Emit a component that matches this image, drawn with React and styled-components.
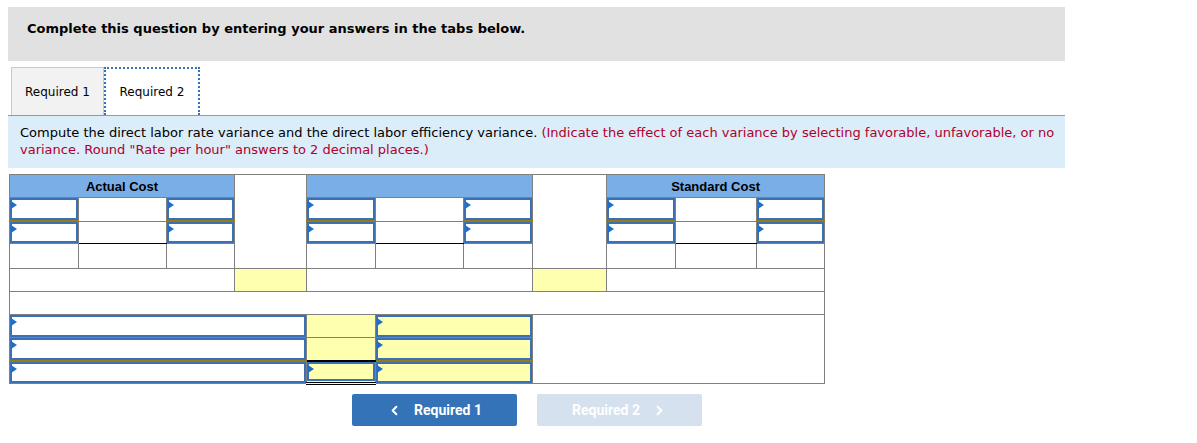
import React from 'react';
import styled, { createGlobalStyle } from 'styled-components';
import { ChevronLeft, ChevronRight } from 'lucide-react';

const GlobalStyle = createGlobalStyle`
  body{
    margin:0;
    background:#fff;
    font-family:"DejaVu Sans", Verdana, sans-serif;
    color:#000;
  }
`;

const Page = styled.div`
  padding:7px 0 0 8px;
  width:1057px;
`;

const Banner = styled.div`
  background:#e1e1e1;
  height:54px;
  box-sizing:border-box;
  padding:14px 0 0 19px;
  font-size:13px;
  line-height:16px;
  font-weight:bold;
`;

const Tabs = styled.div`
  display:flex;
  margin:6px 0 0 3px;
  height:48px;
`;

const Tab = styled.div`
  display:flex;
  align-items:center;
  justify-content:center;
  white-space:nowrap;
  font-size:12px;
  background:${({ $active }) => ($active ? '#fff' : '#f2f2f2')};
  border:${({ $active }) => ($active ? '2px dotted #3a70b5' : '1px solid #c8c8c8')};
  border-bottom:none;
  box-sizing:border-box;
  width:${({ $active }) => ($active ? '96px' : '93px')};
`;

const Instructions = styled.div`
  background:#dbedf9;
  border-top:1px solid #999;
  padding:8px 3px 10px 12px;
  font-size:13px;
  line-height:17px;
`;

const Red = styled.span`
  color:#b0002b;
`;

const Sheet = styled.table`
  border-collapse:collapse;
  table-layout:fixed;
  width:816px;
  margin:6px 0 0 1px;
  font-family:"Liberation Sans", Arial, sans-serif;
`;

const Head = styled.th`
  background:#79aee6;
  border:1px solid #808080;
  height:22px;
  padding:0;
  font-size:13px;
  font-weight:bold;
`;

const Cell = styled.td`
  border:1px solid #808080;
  border-top:${({ $olive, $blackTop }) =>
    $olive ? '2px solid #9a7a12' : $blackTop ? '2px solid #000' : '1px solid #808080'};
  border-bottom:${({ $under, $double }) =>
    $double ? '3px double #000' : $under ? '1px solid #000' : '1px solid #808080'};
  background:${({ $yellow }) => ($yellow ? '#ffffb0' : '#fff')};
  height:${({ $h }) => $h || 22}px;
  padding:0;
  vertical-align:top;
`;

const InputBox = styled.div`
  position:relative;
  box-sizing:border-box;
  height:${({ $h }) => $h || 22}px;
  border:2px solid #3a70b5;
  background:${({ $yellow }) => ($yellow ? '#ffffb0' : '#fff')};
  &::before{
    content:'';
    position:absolute;
    left:-1px;
    top:1px;
    border-left:6px solid #1e6fcc;
    border-top:4px solid transparent;
    border-bottom:4px solid transparent;
  }
`;

const Nav = styled.div`
  display:flex;
  gap:20px;
  margin:9px 0 0 344px;
`;

const NavButton = styled.button`
  width:165px;
  height:32px;
  border:none;
  border-radius:2px;
  display:flex;
  align-items:center;
  justify-content:center;
  gap:12px;
  font-family:Roboto, "Liberation Sans", sans-serif;
  font-size:14px;
  font-weight:bold;
  color:#fff;
  background:${({ disabled }) => (disabled ? '#d5e1ef' : '#3573b9')};
  cursor:${({ disabled }) => (disabled ? 'default' : 'pointer')};
`;

const widths = [69, 88, 68, 72, 69, 88, 69, 74, 69, 81, 68];

const In = ({ yellow, h, ...rest }) => (
  <Cell {...rest} $yellow={yellow} $h={h}>
    <InputBox $yellow={yellow} $h={h} />
  </Cell>
);

const TripleRow1 = () => (
  <>
    <In />
    <Cell />
    <In />
  </>
);

const TripleRow2 = () => (
  <>
    <In $olive h={21} />
    <Cell $under $h={21} />
    <In $olive h={21} />
  </>
);

const App = () => {
  return (
    <Page>
      <GlobalStyle />
      <Banner>Complete this question by entering your answers in the tabs below.</Banner>
      <Tabs>
        <Tab>Required 1</Tab>
        <Tab $active>Required 2</Tab>
      </Tabs>
      <Instructions>
        Compute the direct labor rate variance and the direct labor efficiency variance.{' '}
        <Red>
          (Indicate the effect of each variance by selecting favorable, unfavorable, or no
          variance. Round "Rate per hour" answers to 2 decimal places.)
        </Red>
      </Instructions>
      <Sheet>
        <colgroup>
          {widths.map((w, i) => (
            <col key={i} style={{ width: w }} />
          ))}
        </colgroup>
        <tbody>
          <tr>
            <Head colSpan={3}>Actual Cost</Head>
            <Cell rowSpan={4} />
            <Head colSpan={3} />
            <Cell rowSpan={4} />
            <Head colSpan={3}>Standard Cost</Head>
          </tr>
          <tr>
            <TripleRow1 />
            <TripleRow1 />
            <TripleRow1 />
          </tr>
          <tr>
            <TripleRow2 />
            <TripleRow2 />
            <TripleRow2 />
          </tr>
          <tr>
            {Array.from({ length: 9 }).map((_, i) => (
              <Cell key={i} $h={24} />
            ))}
          </tr>
          <tr>
            <Cell colSpan={3} />
            <Cell $yellow />
            <Cell colSpan={3} />
            <Cell $yellow />
            <Cell colSpan={3} />
          </tr>
          <tr>
            <Cell colSpan={11} />
          </tr>
          <tr>
            <In colSpan={4} />
            <Cell $yellow />
            <In colSpan={2} yellow />
            <Cell colSpan={4} rowSpan={3} />
          </tr>
          <tr>
            <In colSpan={4} />
            <Cell $yellow />
            <In colSpan={2} yellow />
          </tr>
          <tr>
            <In colSpan={4} $olive h={21} />
            <In yellow $blackTop $double h={19} />
            <In colSpan={2} yellow $olive h={21} />
          </tr>
        </tbody>
      </Sheet>
      <Nav>
        <NavButton>
          <ChevronLeft size={15} strokeWidth={3.2} />
          Required 1
        </NavButton>
        <NavButton disabled>
          Required 2
          <ChevronRight size={15} strokeWidth={3.2} />
        </NavButton>
      </Nav>
    </Page>
  );
};

export default App;
